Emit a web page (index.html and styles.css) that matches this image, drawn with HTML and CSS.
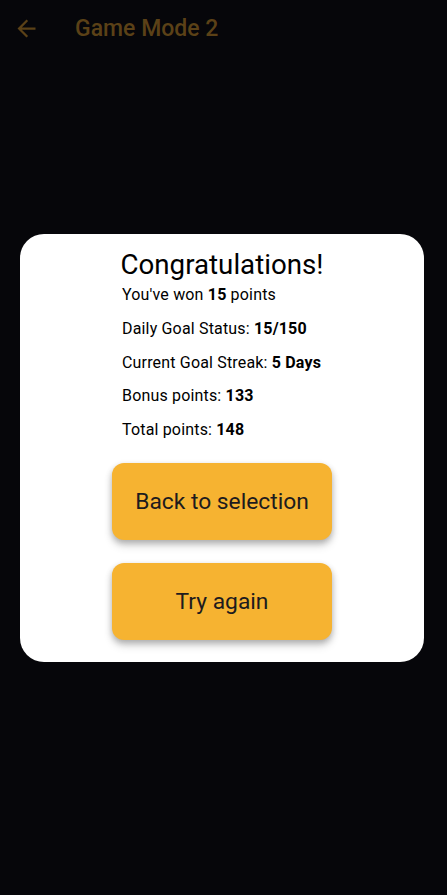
FILE: index.html
```html
<!DOCTYPE html>
<html>
<head>
<meta charset="utf-8">
<link rel="stylesheet" href="styles.css">
</head>
<body>
<div class="screen">
  <header class="appbar">
    <svg class="back" viewBox="0 0 24 24" width="27" height="27"><path d="M20 11H7.83l5.59-5.59L12 4l-8 8 8 8 1.41-1.41L7.83 13H20v-2z" fill="currentColor"/></svg>
    <span class="apptitle">Game Mode 2</span>
  </header>
  <main class="overlay">
    <div class="dialog">
      <div class="content">
        <h1 class="title">Congratulations!</h1>
        <div class="stats">
          <p class="line">You've won <b>15</b> points</p>
          <p class="line">Daily Goal Status: <b>15/150</b></p>
          <p class="line">Current Goal Streak: <b>5 Days</b></p>
          <p class="line">Bonus points: <b>133</b></p>
          <p class="line">Total points: <b>148</b></p>
        </div>
        <div class="actions">
          <button class="btn">Back to selection</button>
          <button class="btn">Try again</button>
        </div>
      </div>
    </div>
  </main>
</div>
</body>
</html>
```
FILE: styles.css
```css
* { box-sizing: border-box; }
html, body {
  margin: 0;
  padding: 0;
  background: #06060a;
  font-family: Roboto, "Noto Sans", sans-serif;
}
.screen {
  width: 447px;
  height: 895px;
  display: flex;
  flex-direction: column;
  background: #06060a;
}
.appbar {
  height: 56px;
  display: flex;
  align-items: center;
  padding-left: 12.5px;
  color: #5b4117;
  flex: none;
}
.back { display: block; }
.apptitle {
  margin-left: 35.5px;
  font-size: 23px;
  font-weight: 500;
  color: #5b4117;
}
.overlay {
  flex: 1;
  display: flex;
  justify-content: flex-start;
  padding-left: 20px;
  padding-top: 178px;
}
.dialog {
  width: 404px;
  height: 428px;
  background: #ffffff;
  border-radius: 24px;
  display: flex;
  justify-content: center;
}
.content {
  width: 220px;
  display: flex;
  flex-direction: column;
  align-items: center;
  padding-top: 14px;
}
.title {
  margin: 0;
  font-size: 27.7px;
  font-weight: 400;
  color: #000;
  line-height: 34px;
  white-space: nowrap;
}
.stats {
  align-self: stretch;
  padding-left: 10px;
  display: flex;
  flex-direction: column;
  gap: 14.75px;
  margin-top: 3px;
}
.line {
  margin: 0;
  font-size: 16px;
  letter-spacing: 0.17px;
  line-height: 19px;
  color: #000;
  white-space: nowrap;
}
.line b { font-weight: 700; }
.actions {
  align-self: stretch;
  display: flex;
  flex-direction: column;
  gap: 23px;
  margin-top: 24px;
}
.btn {
  width: 220px;
  height: 77px;
  border: none;
  border-radius: 12px;
  background: #f6b331;
  color: #1d1b1e;
  font-family: Roboto, "Noto Sans", sans-serif;
  font-size: 22.8px;
  font-weight: 400;
  box-shadow: 0 3px 6px rgba(0,0,0,0.25), 0 6px 10px rgba(0,0,0,0.12);
  padding: 0;
}
```
